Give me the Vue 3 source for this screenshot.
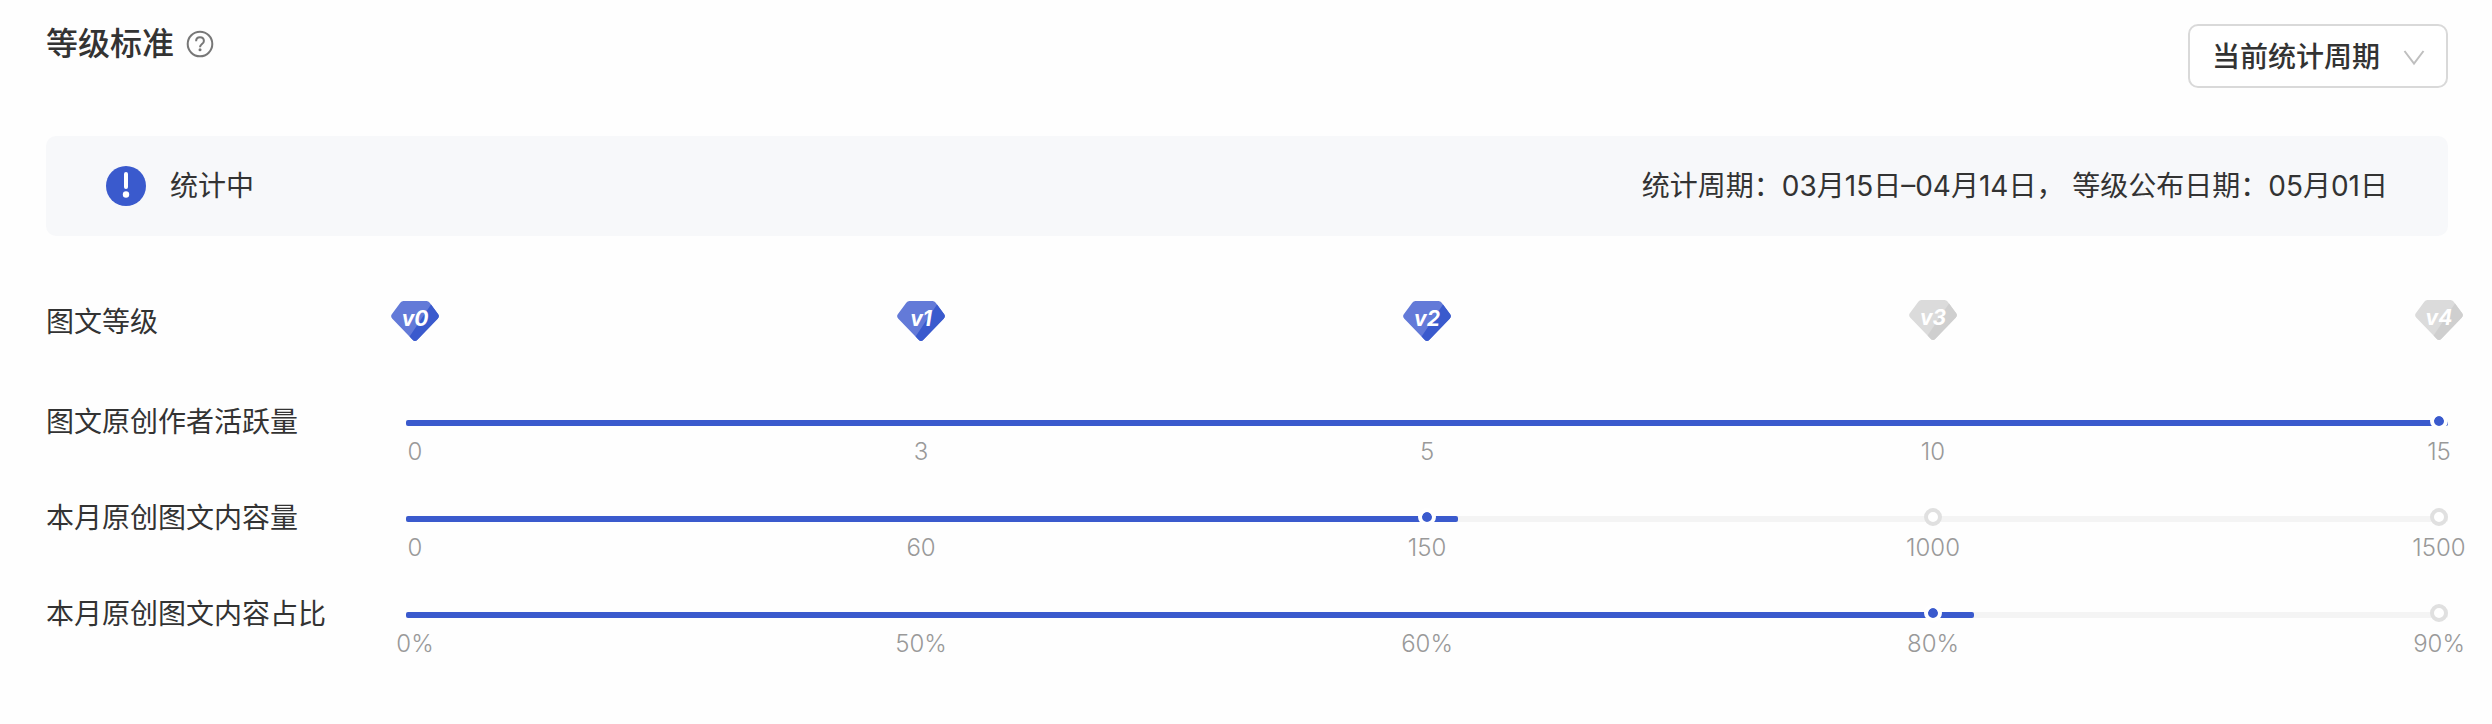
<script setup>
import { ref } from 'vue'

const period = ref('current')

const levels = [
  { name: 'v0', reached: true },
  { name: 'v1', reached: true },
  { name: 'v2', reached: true },
  { name: 'v3', reached: false },
  { name: 'v4', reached: false },
]

const metrics = [
  { label: '图文原创作者活跃量', percent: 100, stops: ['0', '3', '5', '10', '15'], current: 4 },
  { label: '本月原创图文内容量', percent: 51.5, stops: ['0', '60', '150', '1000', '1500'], current: 2 },
  { label: '本月原创图文内容占比', percent: 76.8, stops: ['0%', '50%', '60%', '80%', '90%'], current: 3 },
]

function markerClass(metric, index) {
  if (index === metric.current) return 'current'
  return index > metric.current ? 'pending' : 'passed'
}
</script>

<template>
  <section class="panel">
    <header class="head">
      <h2 class="title">
        等级标准
        <button class="help" type="button" aria-label="等级说明">
          <svg width="28" height="28" viewBox="0 0 28 28" fill="none" stroke="#777" stroke-width="2">
            <circle cx="14" cy="14" r="12.3" />
            <path d="M10.1 11.2c0-2.4 1.6-4 3.9-4s3.9 1.5 3.9 3.7c0 3.1-3.9 3.2-3.9 6.3" />
            <circle cx="14" cy="19.8" r="1.5" fill="#777" stroke="none" />
          </svg>
        </button>
      </h2>
      <div class="picker">
        <select v-model="period" class="select" aria-label="统计周期">
          <option value="current">当前统计周期</option>
        </select>
        <svg class="arrow" width="22" height="16" viewBox="0 0 22 16" fill="none" stroke="#bfbfbf" stroke-width="2">
          <path d="M1.5 1L11 13.5L20.5 1" />
        </svg>
      </div>
    </header>

    <div class="notice">
      <svg width="40" height="40" viewBox="0 0 40 40">
        <circle cx="20" cy="20" r="20" fill="#3a5acd" />
        <rect x="18" y="6" width="4" height="17" rx="2" fill="#fff" />
        <circle cx="20" cy="28.5" r="3.2" fill="#fff" />
      </svg>
      <span class="state">统计中</span>
      <span class="dates">统计周期：03月15日–04月14日，&nbsp;等级公布日期：05月01日</span>
    </div>

    <div class="row levels">
      <span class="label">图文等级</span>
      <div class="stops">
        <div v-for="level in levels" :key="level.name" class="stop">
          <svg class="gem" :class="{ reached: level.reached }" width="48" height="40" viewBox="0 0 48 40">
            <path
              class="face"
              d="M12.5 0H35.5Q37.5 0 38.7 1.7L47.2 13.2Q48.7 15.3 46.9 17.4L26.4 38.7Q24 41.2 21.6 38.7L1.1 17.4Q-.7 15.3.8 13.2L9.3 1.7Q10.5 0 12.5 0Z"
            />
            <path class="shade" d="M40 3.4L47.2 13.2Q48.7 15.3 46.9 17.4L26.4 38.7Q24 41.2 21.6 38.7L18.6 35.6Z" />
            <text class="gem-text" x="24" y="25" text-anchor="middle">{{ level.name }}</text>
          </svg>
        </div>
      </div>
    </div>

    <div v-for="metric in metrics" :key="metric.label" class="row">
      <span class="label">{{ metric.label }}</span>
      <div class="scale">
        <div class="track">
          <div class="fill" :style="{ width: metric.percent + '%' }"></div>
        </div>
        <div class="stops">
          <div v-for="(stop, i) in metric.stops" :key="stop" class="stop">
            <i class="marker" :class="markerClass(metric, i)"></i>
            <span class="value">{{ stop }}</span>
          </div>
        </div>
      </div>
    </div>
  </section>
</template>

<style>
body {
  margin: 0;
  background: #fefefe;
}
</style>

<style scoped>
.panel {
  padding: 24px 44px 0 46px;
  color: #333;
  font: 28px/40px Inter, "Noto Sans CJK SC", sans-serif;
}
.head {
  display: flex;
  justify-content: space-between;
  align-items: flex-start;
}
.title {
  display: flex;
  align-items: center;
  gap: 12px;
  margin: 0;
  font-size: 32px;
  line-height: 40px;
  font-weight: 500;
}
.help {
  display: flex;
  padding: 0;
  border: 0;
  background: none;
}
.picker {
  position: relative;
}
.select {
  display: block;
  box-sizing: border-box;
  width: 260px;
  height: 64px;
  padding: 2px 22px 0;
  border: 2px solid #d9d9d9;
  border-radius: 10px;
  background: #fff;
  color: #333;
  font: inherit;
  font-weight: 500;
  appearance: none;
}
.arrow {
  position: absolute;
  top: 26px;
  right: 23px;
  pointer-events: none;
}
.notice {
  display: flex;
  align-items: center;
  height: 100px;
  margin: 48px 0 64px;
  padding: 0 60px;
  border-radius: 10px;
  background: #f7f8fa;
}
.state {
  margin-left: 24px;
}
.dates {
  margin-left: auto;
}
.row {
  display: flex;
  height: 96px;
}
.levels {
  height: 100px;
}
.label {
  flex: none;
  width: 360px;
  padding-top: 2px;
  white-space: nowrap;
}
.scale {
  position: relative;
  flex: 1;
  padding-top: 12px;
}
.track {
  position: absolute;
  top: 20px;
  left: 0;
  right: 0;
  height: 6px;
  border-radius: 2px;
  background: #f4f4f4;
}
.fill {
  height: 100%;
  border-radius: 2px;
  background: #3a5acd;
}
.stops {
  position: relative;
  display: flex;
  flex: 1;
  justify-content: space-between;
}
.stop {
  display: flex;
  flex-direction: column;
  align-items: center;
  width: 18px;
}
.marker {
  box-sizing: border-box;
  width: 18px;
  height: 18px;
  border: 4px solid transparent;
  border-radius: 50%;
}
.current {
  border-color: #fff;
  background: #3a5acd;
  background-clip: padding-box;
}
.pending {
  border-color: #e0e0e0;
  background: #fff;
}
.value {
  margin-top: 6px;
  color: #999;
  font-size: 24px;
  font-weight: 300;
  line-height: 32px;
}
.gem {
  flex: none;
}
.face {
  fill: #dbdbdb;
}
.shade {
  fill: #cfcfcf;
}
.reached {
  margin-top: 1px;
}
.reached .face {
  fill: #637ad8;
}
.reached .shade {
  fill: #3a5acd;
}
.gem-text {
  fill: #fff;
  font: italic 700 21px Inter, sans-serif;
}
</style>
